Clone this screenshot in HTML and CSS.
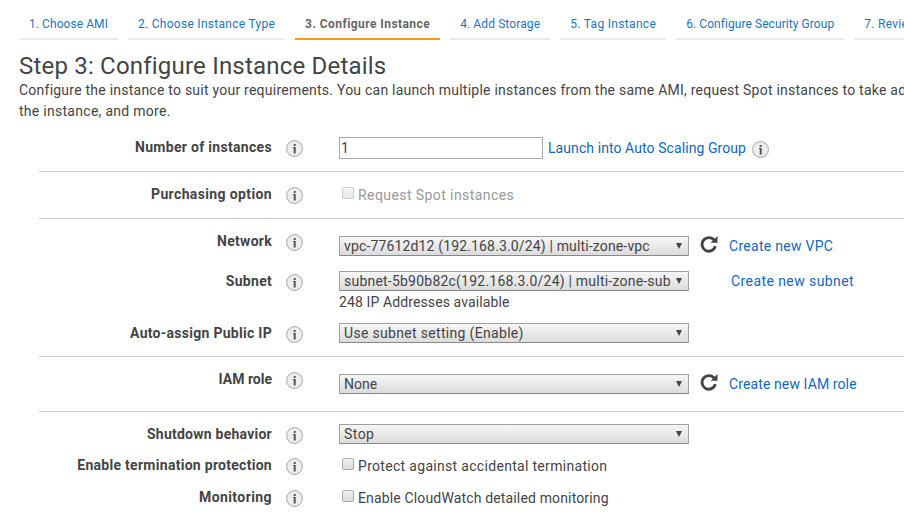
FILE: index.html
```html
<!DOCTYPE html>
<html lang="en">
<head>
<meta charset="utf-8">
<title>Step 3: Configure Instance Details</title>
<link rel="stylesheet" href="styles.css">
</head>
<body>
<svg width="0" height="0" class="defs">
  <defs>
    <symbol id="info" viewBox="0 0 17 17">
      <circle cx="8.5" cy="8.5" r="7.9" fill="#eee" stroke="#a4a4a4" stroke-width="1"/>
      <path d="M7.7 4h2v2h-2zM7 7h2.7v6.5h-2V8H7z" fill="#555"/>
    </symbol>
    <symbol id="refresh" viewBox="0 0 18 18">
      <path d="M14.2 5.2A6.8 6.8 0 1 0 15.4 11.2" fill="none" stroke="#444" stroke-width="2.9"/>
      <path d="M17.5 1V7.8H10.7z" fill="#444"/>
    </symbol>
  </defs>
</svg>
<nav class="steps">
  <a class="tracking-7">1. Choose AMI</a>
  <a class="tracking-28">2. Choose Instance Type</a>
  <a class="current tracking-44">3. Configure Instance</a>
  <a class="tracking-11">4. Add Storage</a>
  <a class="tracking-32">5. Tag Instance</a>
  <a class="tracking-7">6. Configure Security Group</a>
  <a class="tracking-28">7. Review</a>
</nav>
<header>
  <h1>Step 3: Configure Instance Details</h1>
  <p>Configure the instance to suit your requirements. You can launch multiple instances from the same AMI, request Spot instances to take advantage<br><span class="tracking-28">the instance, and more.</span></p>
</header>
<main>
  <section class="first">
    <div class="row">
      <label class="tracking-31">Number of instances</label><svg class="info"><use href="#info"/></svg>
      <div class="control"><input class="count" type="text" value="1"><a class="after-input tracking-8">Launch into Auto Scaling Group</a><svg class="info inline-info"><use href="#info"/></svg></div>
    </div>
  </section>
  <section class="purchase">
    <div class="row">
      <label class="tracking-37">Purchasing option</label><svg class="info"><use href="#info"/></svg>
      <div class="control check disabled"><i class="box"></i><span class="tracking-42">Request Spot instances</span></div>
    </div>
  </section>
  <section class="network">
    <div class="row vpc">
      <label class="tracking-28">Network</label><svg class="info"><use href="#info"/></svg>
      <div class="control lowered"><div class="select"><span class="tracking-15">vpc-77612d12 (192.168.3.0/24) | multi-zone-vpc</span></div><svg class="refresh"><use href="#refresh"/></svg><a class="tracking-28">Create new VPC</a></div>
    </div>
    <div class="row subnet">
      <label class="tracking-28">Subnet</label><svg class="info"><use href="#info"/></svg>
      <div>
        <div class="control"><div class="select"><span class="tracking-22">subnet-5b90b82c(192.168.3.0/24) | multi-zone-sub</span></div><a class="no-refresh tracking-42">Create new subnet</a></div>
        <div class="note tracking-11">248 IP Addresses available</div>
      </div>
    </div>
    <div class="row">
      <label class="tracking-28">Auto-assign Public IP</label><svg class="info"><use href="#info"/></svg>
      <div class="control"><div class="select"><span class="tracking-32">Use subnet setting (Enable)</span></div></div>
    </div>
  </section>
  <section class="iam">
    <div class="row">
      <label>IAM role</label><svg class="info"><use href="#info"/></svg>
      <div class="control lowered"><div class="select"><span>None</span></div><svg class="refresh"><use href="#refresh"/></svg><a class="tracking-11">Create new IAM role</a></div>
    </div>
  </section>
  <section class="behavior">
    <div class="row shutdown">
      <label class="tracking-24">Shutdown behavior</label><svg class="info"><use href="#info"/></svg>
      <div class="control"><div class="select"><span class="tracking-44">Stop</span></div></div>
    </div>
    <div class="row protection">
      <label class="tracking-28">Enable termination protection</label><svg class="info"><use href="#info"/></svg>
      <div class="control check"><i class="box"></i><span class="tracking-31">Protect against accidental termination</span></div>
    </div>
    <div class="row">
      <label class="tracking-42">Monitoring</label><svg class="info"><use href="#info"/></svg>
      <div class="control check"><i class="box"></i><span class="tracking-15">Enable CloudWatch detailed monitoring</span></div>
    </div>
  </section>
</main>
</body>
</html>
```
FILE: styles.css
```css
* { box-sizing: border-box; }
html { height: 512px; overflow: hidden; }
body {
  margin: 0;
  height: 512px;
  overflow: hidden;
  background: #fff;
  color: #444;
  font: 14px/20px Roboto, "Liberation Sans", sans-serif;
}
svg { display: block; flex: none; }
.defs { position: absolute; }
a { color: #1a76bc; white-space: nowrap; }
main a { color: #1168bd; }

.tracking-7 { letter-spacing: 0.07px; }
.tracking-8 { letter-spacing: 0.08px; }
.tracking-11 { letter-spacing: 0.11px; }
.tracking-15 { letter-spacing: 0.15px; }
.tracking-22 { letter-spacing: 0.22px; }
.tracking-24 { letter-spacing: 0.24px; }
.tracking-28 { letter-spacing: 0.28px; }
.tracking-31 { letter-spacing: 0.31px; }
.tracking-32 { letter-spacing: 0.32px; }
.tracking-37 { letter-spacing: 0.37px; }
.tracking-42 { letter-spacing: 0.42px; }
.tracking-44 { letter-spacing: 0.44px; }

.steps { display: flex; gap: 10px; padding: 8px 0 0 19px; }
.steps a {
  flex: none;
  height: 32px;
  padding: 0 10px;
  border-bottom: 2px solid #eaeaea;
  font-size: 12px;
  line-height: 32px;
}
.steps .current { border-color: #ff9914; color: #666; font-weight: bold; }
.steps a:last-child { flex: 0 1 auto; min-width: 0; padding-right: 0; overflow: hidden; }

header { height: 85px; padding: 12px 0 0 19px; overflow: hidden; }
h1 { margin: 0; font-size: 24px; line-height: 28px; font-weight: 400; letter-spacing: 0.2px; white-space: nowrap; }
p { margin: 0; line-height: 21px; letter-spacing: 0.235px; white-space: nowrap; overflow: hidden; }

main { margin-left: 39px; }
section { padding-top: 12px; border-bottom: 1px solid #ccc; }
.first, .purchase { height: 47px; }
.network { height: 138px; }
.iam { height: 55px; }
.behavior { border-bottom: 0; }
.row { display: grid; grid-template-columns: 233px 17px auto; column-gap: 0; justify-content: start; align-items: start; }
.row label { text-align: right; font-weight: bold; white-space: nowrap; }
.row > .info { margin: 3px 0 0 14px; }
.row > :last-child { margin-left: 50px; }
.info { width: 17px; height: 17px; }
.vpc { height: 40px; }
.subnet { height: 52px; }
.shutdown { height: 31px; }
.protection { height: 32px; }

.control { display: flex; align-items: flex-start; }
.lowered { padding-top: 5px; }
.count {
  width: 204px;
  height: 22px;
  margin: 0;
  padding: 0 1px;
  border: 1px solid #a9a9a9;
  background: #fff;
  color: #444;
  font: 14px/20px Roboto, sans-serif;
}
.after-input { margin: 1px 0 0 5px; }
.inline-info { margin: 4px 0 0 6px; }
.check { padding-left: 3px; }
.box {
  flex: none;
  width: 12px;
  height: 12px;
  margin: 3px 4px 0 0;
  border: 1px solid #aaa;
  border-radius: 2px;
  background: linear-gradient(#eee, #dcdcdc);
  box-shadow: inset 0 1px #f4f4f4;
}
.check span { margin-top: 1px; }
.disabled { color: #999; }
.disabled .box { opacity: 0.6; }
.select {
  position: relative;
  flex: none;
  width: 350px;
  height: 20px;
  padding: 0 17px 0 4px;
  border: 1px solid #a0a0a0;
  border-bottom-color: #888;
  border-radius: 1px;
  background: linear-gradient(#f6f6f6, #dcdcdc);
  line-height: 19px;
}
.select span { display: block; overflow: hidden; white-space: nowrap; }
.select::after {
  content: "";
  position: absolute;
  top: 6px;
  right: 6px;
  border: 3px solid transparent;
  border-top: 6px solid #444;
  border-bottom: 0;
}
.refresh { width: 18px; height: 18px; margin: -1px 11px 0; }
.no-refresh { margin-left: 42px; }
.note { margin-top: 1px; white-space: nowrap; }
```
